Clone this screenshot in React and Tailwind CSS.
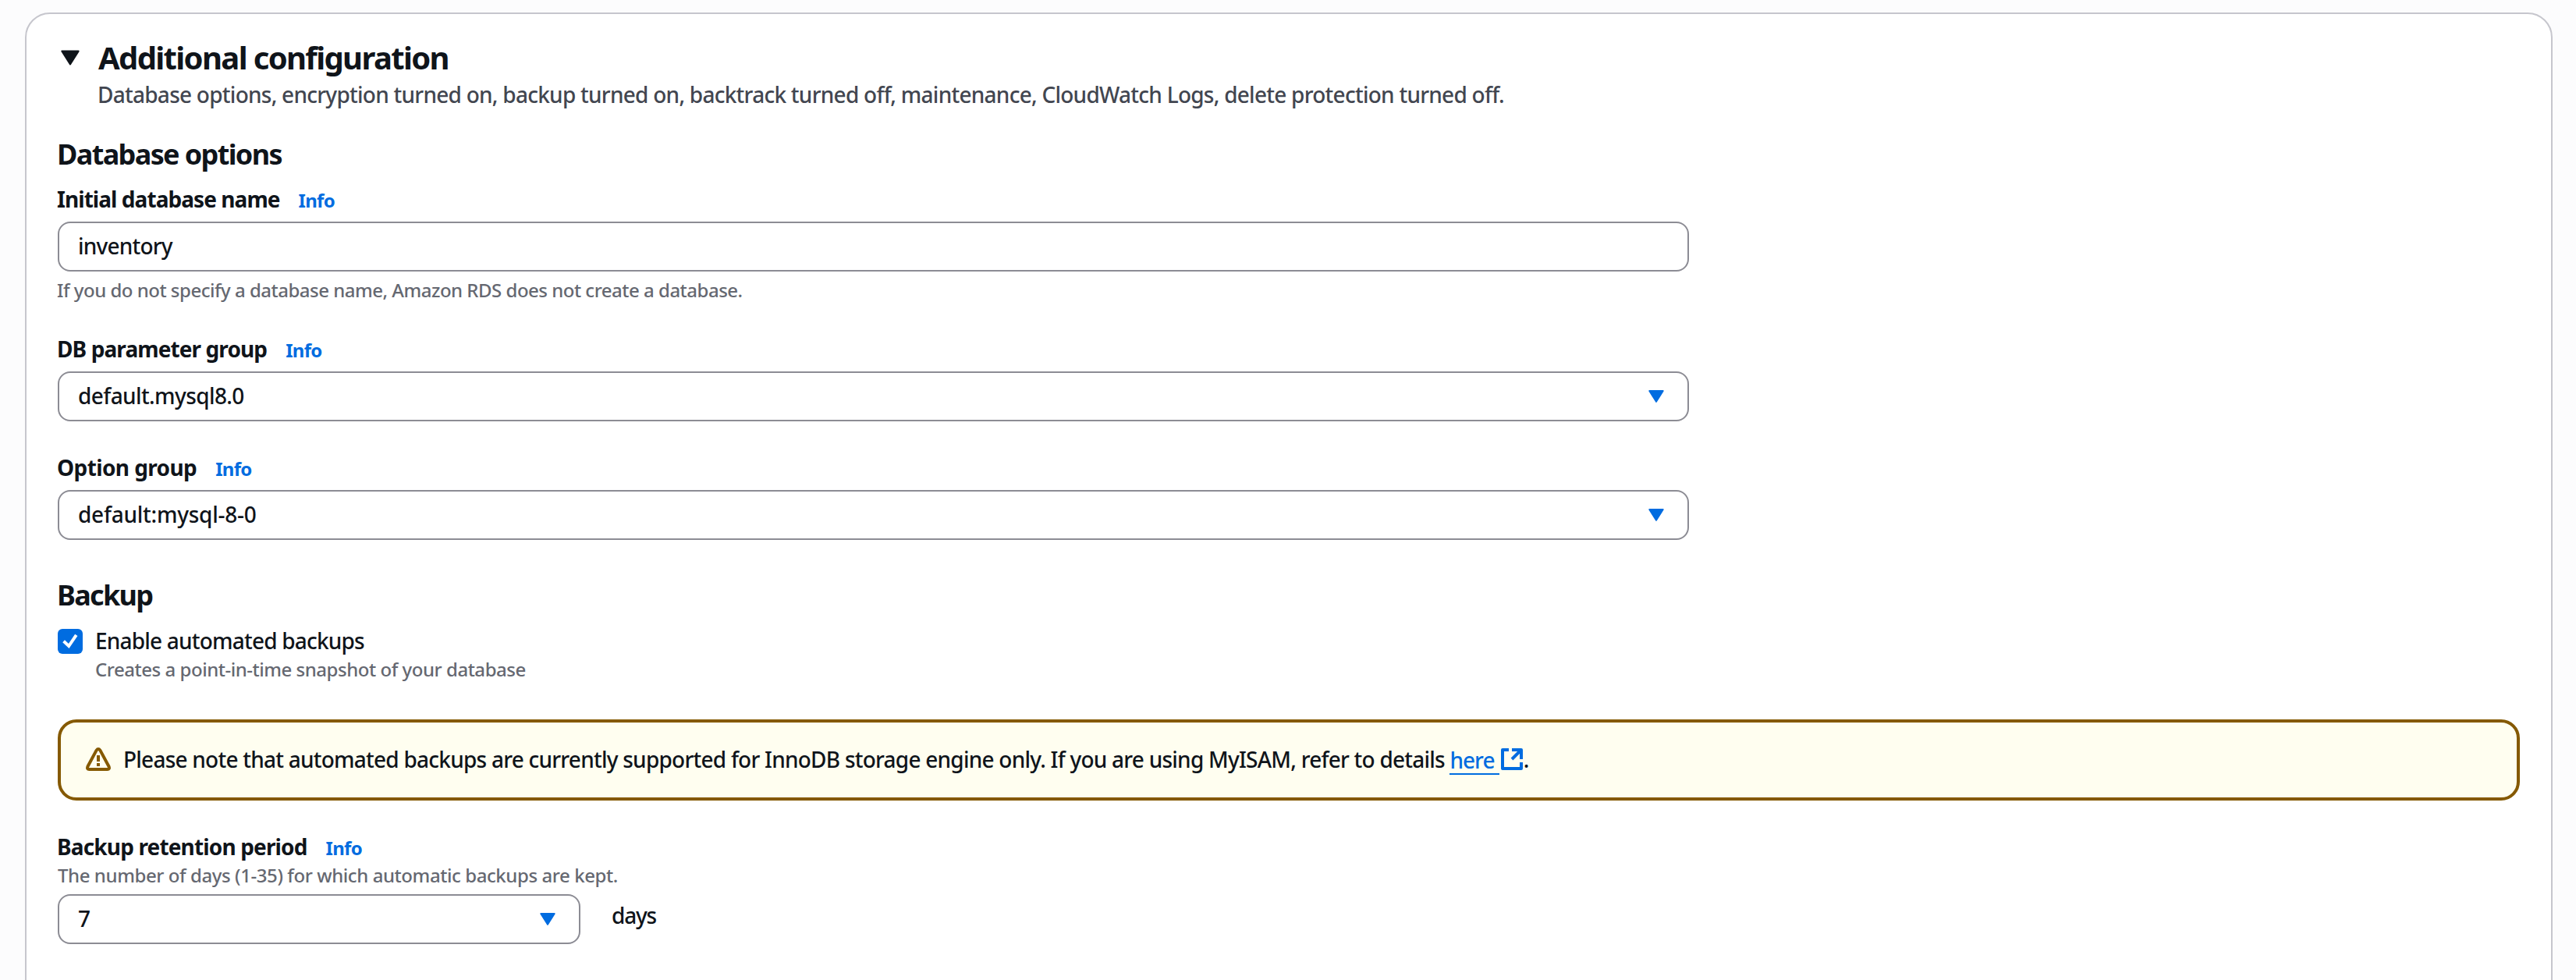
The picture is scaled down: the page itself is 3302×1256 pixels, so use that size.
function Caret({ className }) {
  return (
    <svg viewBox="0 0 20 16" className={className} fill="currentColor" stroke="currentColor" strokeWidth="2" strokeLinejoin="round">
      <path d="M1.3 1H18.7L10 14.8Z" />
    </svg>
  );
}

function WarningIcon() {
  return (
    <svg viewBox="0 0 32 30" className="h-[30px] w-8 shrink-0 text-[#855900]" fill="none" stroke="currentColor" strokeWidth="4">
      <path d="M13.6 3.6Q16 0.4 18.4 3.6L29.5 24.3Q31 28 27.6 28H4.4Q1 28 2.5 24.3Z" strokeLinejoin="round" />
      <path d="M16 10V18M16 20V24" />
    </svg>
  );
}

function ExternalIcon() {
  return (
    <svg viewBox="0 0 28 28" className="size-7 text-[#006ce0]" fill="none" stroke="currentColor" strokeWidth="4">
      <path d="M10 2H2V26H26V18" strokeLinejoin="round" />
      <path d="M14 2H26V14M26 2L14 14" strokeLinejoin="round" />
    </svg>
  );
}

function Label({ children, className }) {
  return (
    <div className="-ml-px flex h-10 items-baseline leading-10 font-bold">
      <span className={className}>{children}</span>
      <a className="ml-6 text-[24px] tracking-[-0.7px] text-[#006ce0]">Info</a>
    </div>
  );
}

function Hint({ children, className }) {
  return <p className={`text-[24px] leading-8 text-[#656871] ${className}`}>{children}</p>;
}

function Field({ children, caret, className, textClass }) {
  return (
    <div className={`flex h-16 items-center justify-between rounded-2xl border-2 border-[#8c8c94] bg-white pl-6 ${className}`}>
      <span className={`pb-0.5 ${textClass}`}>{children}</span>
      {caret && <Caret className="mr-[30px] h-4 w-5 text-[#006ce0]" />}
    </div>
  );
}

export default function App() {
  return (
    <div className="h-[1256px] overflow-hidden bg-[#fcfcfd] pt-4 pr-[30px] pl-8 font-['Noto_Sans',sans-serif] text-[28px] leading-10 font-medium whitespace-nowrap text-[#0f141a]">
      <section className="h-[1400px] rounded-[32px] border-2 border-[#c6c6cd] bg-white pt-8 pr-10 pl-10">
        <header className="flex">
          <Caret className="mt-[14px] ml-1 h-5 w-6 shrink-0" />
          <div className="ml-6">
            <h2 className="text-[40px] leading-[48px] font-bold tracking-[-1.65px]">Additional configuration</h2>
            <p className="mt-[3px] -ml-px tracking-[-0.745px] text-[#424650]">
              Database options, encryption turned on, backup turned on, backtrack turned off, maintenance, CloudWatch Logs, delete protection turned off.
            </p>
          </div>
        </header>

        <h3 className="mt-[35px] -ml-px text-[36px] leading-[44px] font-bold tracking-[-1.63px]">Database options</h3>
        <div className="mt-[15px] flex w-[2091px] flex-col">
          <Label className="tracking-[-0.94px]">Initial database name</Label>
          <Field className="mt-[9px]" textClass="tracking-[-0.8px]">inventory</Field>
          <Hint className="mt-2 -ml-px tracking-[-0.5px]">If you do not specify a database name, Amazon RDS does not create a database.</Hint>
          <div className="mt-[39px]">
            <Label className="tracking-[-0.9px]">DB parameter group</Label>
            <Field caret className="mt-[9px]" textClass="tracking-[-0.6px]">default.mysql8.0</Field>
          </div>
          <div className="mt-[39px]">
            <Label className="tracking-[-0.6px]">Option group</Label>
            <Field caret className="mt-[9px]" textClass="tracking-[-0.25px]">default:mysql-8-0</Field>
          </div>
        </div>

        <h3 className="mt-[49px] -ml-px text-[36px] leading-[44px] font-bold tracking-[-1.7px]">Backup</h3>
        <div className="mt-4 flex">
          <div className="mt-[5px] size-8 shrink-0 rounded-md bg-[#006ce0]">
            <svg viewBox="0 0 32 32" className="size-8" fill="none" stroke="white" strokeWidth="4">
              <path d="M7.6 15.8L14.2 22L23.8 7.8" />
            </svg>
          </div>
          <div className="ml-4">
            <p className="tracking-[-0.8px]">Enable automated backups</p>
            <Hint className="mt-px tracking-[-0.47px]">Creates a point-in-time snapshot of your database</Hint>
          </div>
        </div>

        <div className="mt-12 flex h-[104px] w-[3156px] items-center rounded-3xl border-4 border-[#855900] bg-[#fffef0] pl-8">
          <div className="pb-0.5">
            <WarningIcon />
          </div>
          <p className="ml-4 flex items-center whitespace-pre pb-0.5">
            <span className="tracking-[-0.765px]">{"Please note that automated backups are currently supported for InnoDB storage engine only. If you are using MyISAM, refer to details "}</span>
            <a className="flex items-center text-[#006ce0]">
              <span className="h-[39px] border-b-2 border-[#006ce0] tracking-[-1px]">{"here "}</span>
              <span className="ml-0.5">
                <ExternalIcon />
              </span>
            </a>
            <span className="ml-px">.</span>
          </p>
        </div>

        <div className="mt-[39px]">
          <Label className="tracking-[-0.85px]">Backup retention period</Label>
          <Hint className="mt-px tracking-[-0.42px]">The number of days (1-35) for which automatic backups are kept.</Hint>
          <div className="mt-2 flex">
            <Field caret className="w-[670px]" textClass="">7</Field>
            <span className="mt-[7px] ml-10 tracking-[-1.2px]">days</span>
          </div>
        </div>
      </section>
    </div>
  );
}
